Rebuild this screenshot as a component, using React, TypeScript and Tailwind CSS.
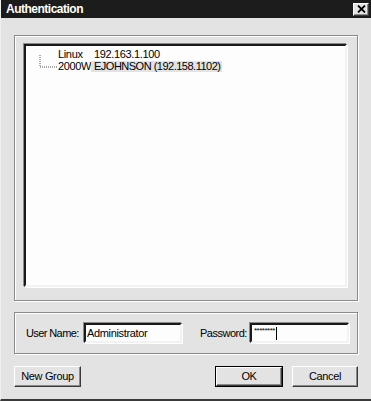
import React from "react";

const raised =
  "border border-t-white border-l-white border-b-[#3a3a3a] border-r-[#3a3a3a] shadow-[inset_-1px_-1px_0_#8a8a8a]";
const sunken =
  "border-2 border-t-[#1a1a1a] border-l-[#1a1a1a] border-b-[#f2f2f2] border-r-[#f2f2f2] shadow-[-1px_-1px_0_#8a8a8a,1px_1px_0_#fff]";
const etched =
  "border border-[#8a8a8a] shadow-[1px_1px_0_#fff,inset_1px_1px_0_#fff]";

export default function App() {
  return (
    <div className="w-[371px] h-[401px] bg-[#e3e3e3] flex flex-col font-['Liberation_Sans',Arial,sans-serif] text-[11px] tracking-[-0.35px] text-black border-b-2 border-b-[#3a3a3a] border-l border-l-[#f0f0f0] overflow-hidden whitespace-nowrap">
      {/* Title bar */}
      <div className="h-[18px] bg-[#1c1c1c] flex items-center justify-between pl-[5px] pr-[2px] shrink-0">
        <span className="text-white font-bold text-[12px] tracking-[-0.5px] leading-none">Authentication</span>
        <div className={`w-[16px] h-[13px] bg-[#e6e6e6] flex items-center justify-center ${raised}`}>
          <svg width="9" height="8" viewBox="0 0 9 8">
            <path d="M1 0.5 L8 7.5 M8 0.5 L1 7.5" stroke="#000" strokeWidth="1.8" />
          </svg>
        </div>
      </div>

      <div className="flex flex-col pl-[13px] pr-[13px]">
        {/* Group box with tree */}
        <div className={`mt-[17px] h-[266px] pt-[8px] pl-[9px] pr-[10px] pb-[13px] ${etched}`}>
          <div className={`h-full bg-[#fdfdfd] ${sunken} flex pt-[1px]`}>
            <svg width="32" height="30" className="shrink-0">
              <path d="M14 8 V20 H31" stroke="#555" strokeWidth="1" strokeDasharray="1 1" fill="none" />
            </svg>
            <div className="grid grid-cols-[33px_auto] auto-rows-[12px] items-center leading-none h-fit pt-[1px]">
              <span>Linux</span>
              <span className="pl-[3px]">192.163.1.100</span>
              <span>2000W</span>
              <span className="bg-[#e2e2e2] pl-[3px] pr-[2px] h-[11px] flex items-center w-fit tracking-[-0.5px]">
                EJOHNSON (192.158.1102)
              </span>
            </div>
          </div>
        </div>

        {/* Group box with credentials */}
        <div className={`mt-[11px] h-[42px] flex items-center pl-[11px] ${etched}`}>
          <span className="w-[58px] tracking-[-0.6px]">User Name:</span>
          <div className={`w-[98px] h-[20px] bg-[#fdfdfd] ${sunken} flex items-center pl-[1px] leading-none`}>
            Administrator
          </div>
          <span className="ml-[18px] w-[50px] tracking-[-0.5px]">Password:</span>
          <div className={`w-[99px] h-[20px] bg-[#fdfdfd] ${sunken} flex items-center pl-[2px] leading-none`}>
            <span className="text-[8px] tracking-[-0.5px] -mt-[5px]">********</span>
            <span className="w-[1px] h-[13px] bg-black ml-[1px]" />
          </div>
        </div>

        {/* Buttons */}
        <div className="mt-[12px] flex items-center">
          <button className={`w-[67px] h-[21px] bg-[#e3e3e3] ${raised} leading-none`}>New Group</button>
          <div className="flex-1" />
          <div className="border border-black">
            <button className={`w-[66px] h-[19px] bg-[#e3e3e3] ${raised} leading-none`}>OK</button>
          </div>
          <button className={`ml-[9px] w-[66px] h-[21px] bg-[#e3e3e3] ${raised} leading-none`}>Cancel</button>
        </div>
      </div>
    </div>
  );
}
